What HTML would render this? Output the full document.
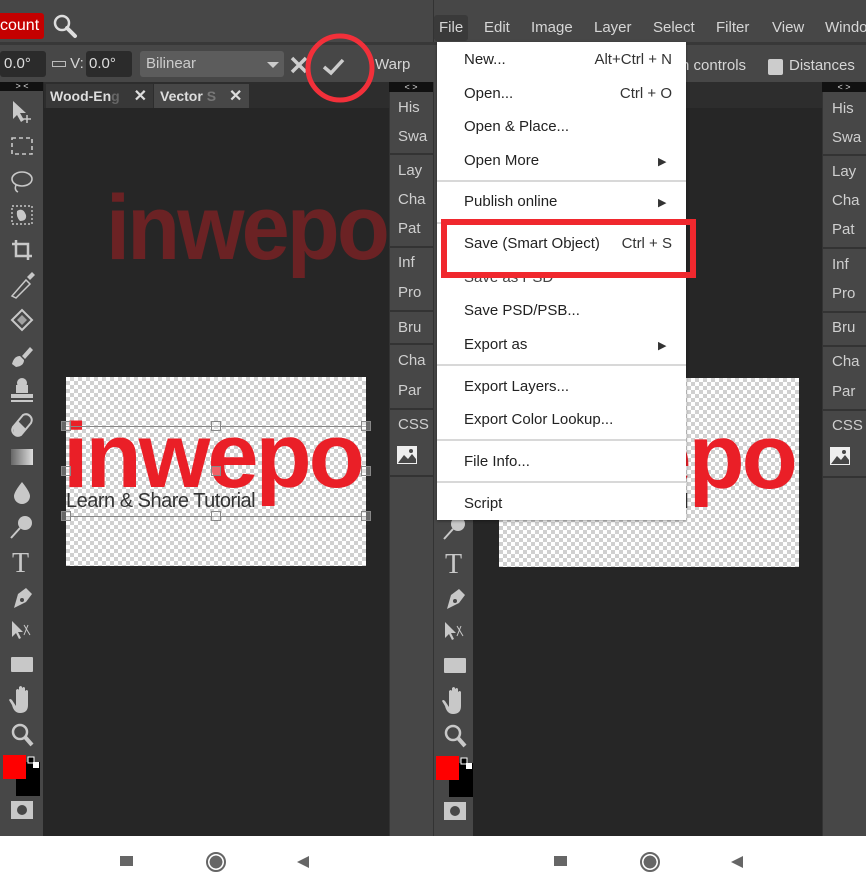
<!DOCTYPE html>
<html><head><meta charset="utf-8"><style>
*{margin:0;padding:0;box-sizing:border-box}
body{width:866px;height:866px;overflow:hidden;background:#fff;font-family:"Liberation Sans",sans-serif;position:relative}
.a{position:absolute}
.t{position:absolute;color:#d6d6d6;font-size:15px;white-space:nowrap}
.chk{background:repeating-conic-gradient(#d0d0d0 0 25%,#fff 0 50%) 0 0/8px 8px}
.pl{position:absolute;color:#cfcfcf;font-size:15px}
.sep{position:absolute;height:2px;background:#333}
.mi{position:absolute;left:464px;font-size:15px;color:#222;white-space:nowrap}
.sc{position:absolute;right:194px;font-size:15px;color:#333;white-space:nowrap}
.ar{position:absolute;left:658px;font-size:11px;color:#333}
.ms{position:absolute;left:437px;width:249px;height:2px;background:#d8d8d8}
.h{position:absolute;width:10px;height:10px;border:1px solid #888;background:rgba(255,255,255,.3)}
.logo{position:absolute;font-weight:bold;font-size:92px;letter-spacing:-3px;line-height:100px;transform:scaleX(1);transform-origin:0 0;white-space:nowrap}
</style></head><body>

<!-- LEFT HALF -->
<div class="a" style="left:0;top:0;width:433px;height:43px;background:#474747"></div>
<div class="a" style="left:0;top:42px;width:433px;height:3px;background:#383838"></div>
<div class="a" style="left:0;top:13px;width:44px;height:26px;background:#c40000;border-radius:0 3px 3px 0;color:#fff;font-size:16px;line-height:26px">count</div>
<svg class="a" style="left:52px;top:13px" width="26" height="26" viewBox="0 0 26 26"><circle cx="10" cy="10" r="7" fill="none" stroke="#ddd" stroke-width="2.5"/><path d="M15 15 L23 23" stroke="#ddd" stroke-width="4" stroke-linecap="round"/></svg>
<div class="a" style="left:0;top:45px;width:433px;height:37px;background:#474747"></div>
<div class="a" style="left:0;top:51px;width:46px;height:26px;background:#2b2b2b;border-radius:3px;color:#ddd;font-size:15px;line-height:26px;padding-left:4px">0.0°</div>
<div class="t" style="left:52px;top:55px"><span style="display:inline-block;width:14px;height:6px;border:1px solid #bbb;vertical-align:middle"></span> V:</div>
<div class="a" style="left:86px;top:51px;width:46px;height:26px;background:#2b2b2b;border-radius:3px;color:#ddd;font-size:15px;line-height:26px;padding-left:3px">0.0°</div>
<div class="a" style="left:140px;top:51px;width:144px;height:26px;background:#5c5c5c;border-radius:3px;color:#ccc;font-size:15px;line-height:26px;padding-left:6px">Bilinear</div>
<div class="a" style="left:267px;top:62px;width:0;height:0;border-left:6px solid transparent;border-right:6px solid transparent;border-top:6px solid #ccc"></div>
<svg class="a" style="left:290px;top:56px" width="18" height="18"><path d="M2 2L16 16M16 2L2 16" stroke="#ccc" stroke-width="3.5"/></svg>
<svg class="a" style="left:322px;top:58px" width="24" height="18"><path d="M2 9L9 15L21 2" stroke="#ccc" stroke-width="3.5" fill="none"/></svg>
<div class="t" style="left:375px;top:56px">Warp</div>

<div class="a" style="left:0;top:82px;width:44px;height:9px;background:#111;color:#ddd;font-size:9px;line-height:9px;text-align:center">&gt; &lt;</div>
<div class="a" style="left:0;top:91px;width:43px;height:745px;background:#474747"></div>
<div class="a" style="left:43px;top:82px;width:346px;height:754px;background:#262626"></div>
<div class="a" style="left:44px;top:82px;width:345px;height:26px;background:#2d2d2d"></div>
<div class="a" style="left:46px;top:84px;width:107px;height:24px;background:#383838;color:#ddd;font-weight:bold;font-size:14px;line-height:24px;padding-left:4px">Wood-En<span style="color:#666">g</span> <span style="margin-left:10px;font-size:16px">✕</span></div>
<div class="a" style="left:154px;top:84px;width:95px;height:24px;background:#474747;color:#ddd;font-weight:bold;font-size:14px;line-height:24px;padding-left:6px">Vector <span style="color:#777">S</span> <span style="margin-left:9px;font-size:16px">✕</span></div>

<div class="logo" style="left:106px;top:178px;color:#6b2224;transform:scaleX(0.94)">inwepo</div>

<div class="a chk" style="left:66px;top:377px;width:300px;height:189px"></div>
<div class="logo" style="left:63px;top:406px;color:#ea1f27">inwepo</div>
<div class="a" style="left:66px;top:490px;color:#333;font-size:20px;letter-spacing:-0.5px">Learn &amp; Share Tutorial</div>
<div class="a" style="left:66px;top:426px;width:300px;height:1px;background:#888"></div>
<div class="a" style="left:66px;top:516px;width:300px;height:1px;background:#888"></div>
<div class="h" style="left:61px;top:421px"></div><div class="h" style="left:211px;top:421px"></div><div class="h" style="left:361px;top:421px"></div>
<div class="h" style="left:61px;top:466px"></div><div class="h" style="left:211px;top:466px"></div><div class="h" style="left:361px;top:466px"></div>
<div class="h" style="left:61px;top:511px"></div><div class="h" style="left:211px;top:511px"></div><div class="h" style="left:361px;top:511px"></div>

<svg class="a" style="left:300px;top:32px" width="80" height="80"><circle cx="40" cy="36" r="32" fill="none" stroke="#f2303a" stroke-width="5"/></svg>

<div class="a" style="left:389px;top:82px;width:44px;height:10px;background:#111;color:#ddd;font-size:9px;line-height:10px;text-align:center">&lt; &gt;</div>
<div class="a" style="left:389px;top:92px;width:44px;height:744px;background:#474747;border-left:1px solid #333"></div>

<!-- RIGHT HALF -->
<div class="a" style="left:433px;top:0;width:433px;height:43px;background:#474747;border-left:1px solid #333"></div>
<div class="a" style="left:433px;top:42px;width:433px;height:3px;background:#383838"></div>
<div class="a" style="left:434px;top:15px;width:34px;height:26px;background:#3a3a3a;border-radius:3px"></div>
<div class="t" style="left:439px;top:19px">File</div>
<div class="t" style="left:484px;top:19px">Edit</div>
<div class="t" style="left:531px;top:19px">Image</div>
<div class="t" style="left:594px;top:19px">Layer</div>
<div class="t" style="left:653px;top:19px">Select</div>
<div class="t" style="left:716px;top:19px">Filter</div>
<div class="t" style="left:772px;top:19px">View</div>
<div class="t" style="left:825px;top:19px">Windo</div>
<div class="a" style="left:433px;top:45px;width:433px;height:37px;background:#474747"></div>
<div class="t" style="left:681px;top:57px">n controls</div>
<div class="a" style="left:768px;top:59px;width:15px;height:16px;background:#ccc;border-radius:2px"></div>
<div class="t" style="left:789px;top:57px">Distances</div>

<div class="a" style="left:433px;top:82px;width:40px;height:754px;background:#474747;border-left:1px solid #333"></div>
<div class="a" style="left:473px;top:82px;width:349px;height:754px;background:#262626"></div>
<div class="a" style="left:473px;top:82px;width:349px;height:26px;background:#2d2d2d"></div>
<div class="a chk" style="left:499px;top:378px;width:300px;height:189px"></div>
<div class="logo" style="left:496px;top:407px;color:#ea1f27">inwepo</div>
<div class="a" style="left:499px;top:491px;color:#333;font-size:20px;letter-spacing:-0.5px">Learn &amp; Share Tutorial</div>

<div class="a" style="left:822px;top:82px;width:44px;height:10px;background:#111;color:#ddd;font-size:9px;line-height:10px;text-align:center">&lt; &gt;</div>
<div class="a" style="left:822px;top:92px;width:44px;height:744px;background:#474747;border-left:1px solid #333"></div>

<!-- toolbars -->
<svg class="a" style="left:0;top:0" width="44" height="836" viewBox="0 0 44 836">
<defs><linearGradient id="g"><stop offset="0" stop-color="#666"/><stop offset="1" stop-color="#ddd"/></linearGradient>
<g id="ic" fill="#c8c8c8" stroke="#c8c8c8">
<g transform="translate(22,112)"><path d="M-9-11L-9 7L-5 3L-1 10L2 8L-2 1L4 1Z" stroke="none"/><path d="M5 3v8M1 7h8" stroke-width="1.5"/></g>
<g transform="translate(22,146)"><rect x="-10" y="-8" width="20" height="16" fill="none" stroke-width="1.6" stroke-dasharray="4 3"/></g>
<g transform="translate(22,181)"><ellipse cx="0" cy="-2" rx="10" ry="7" fill="none" stroke-width="1.6"/><path d="M-6 4q-2 5 2 7" fill="none" stroke-width="1.5"/></g>
<g transform="translate(22,215)"><rect x="-10" y="-9" width="20" height="18" fill="none" stroke-width="1.4" stroke-dasharray="2 2"/><path d="M-5-4q6-4 9 4q1 6-6 6q-4-4-3-10z" stroke="none"/></g>
<g transform="translate(22,250)"><path d="M-6-10v16h16M-10-6h16v16" fill="none" stroke-width="2.5"/></g>
<g transform="translate(22,285)"><path d="M-10 11L4-5L8-1L-6 13Z" fill="none" stroke-width="1.5"/><path d="M5-8l5-5 3 3-5 5z" stroke="none"/></g>
<g transform="translate(22,320)"><path d="M-10 0l10-10 10 10-10 10z" fill="none" stroke-width="2"/><path d="M-5 0l5 5 5-5-5-5z" stroke="none" opacity=".7"/></g>
<g transform="translate(22,354)"><path d="M-10 10q2-8 8-8l4 4q0 6-8 7z" stroke="none"/><path d="M0 2l8-9 3 3-8 9" stroke="none"/></g>
<g transform="translate(22,389)"><path d="M-6-4h12v8h-12z M-11 5h22v4h-22z M-11 11h22v2h-22z" stroke="none"/><circle cx="0" cy="-6" r="5" stroke="none"/></g>
<g transform="translate(22,423)"><path d="M-9 4l10-12q4-2 7 1t1 7l-10 12q-4 2-7-1t-1-7z" fill="none" stroke-width="2"/><path d="M-9 4l5-6 8 8-5 6q-4 2-7-1z" stroke="none"/></g>
<g transform="translate(22,457)"><rect x="-11" y="-8" width="22" height="16" stroke="none" fill="url(#g)"/></g>
<g transform="translate(22,492)"><path d="M0-10q-8 10-8 14a8 8 0 0 0 16 0q0-4-8-14z" stroke="none"/></g>
<g transform="translate(22,526)"><circle cx="3" cy="-3" r="7" stroke="none"/><path d="M-2 2l-9 10" stroke-width="2"/></g>
<g transform="translate(22,561)"><text x="-10" y="11" font-family="Liberation Serif" font-size="28" stroke="none">T</text></g>
<g transform="translate(22,596)"><path d="M-8 12l4-14 8-6 6 6-6 8z" stroke="none"/><circle cx="0" cy="4" r="2" fill="#474747" stroke="none"/></g>
<g transform="translate(22,631)"><path d="M-10-10v16l4-4 3 6 2-1-3-6 5 0z" stroke="none"/><path d="M2-6l6 10M6-6l-4 10" stroke-width="1" fill="none"/></g>
<g transform="translate(22,665)"><rect x="-11" y="-8" width="22" height="15" rx="1" stroke="none"/></g>
<g transform="translate(22,700)"><path d="M-6 6v-16q2-2 3 0v10v-13q2-2 3 0v13v-12q2-2 3 0v12v-9q2-2 3 0v14q0 8-8 8q-6 0-8-8l-3-5q1-2 3 0z" stroke="none"/></g>
<g transform="translate(22,734)"><circle cx="-2" cy="-2" r="7" fill="none" stroke-width="2.5"/><path d="M3 3l7 8" stroke-width="4"/></g>
<rect x="16" y="762" width="24" height="34" fill="#000" stroke="none"/>
<rect x="28" y="757" width="6" height="6" fill="#000" stroke="#fff" stroke-width="1"/><rect x="33" y="762" width="6" height="6" fill="#fff" stroke="none"/>
<rect x="3" y="755" width="23" height="24" fill="#f00" stroke="none"/>
<g transform="translate(22,810)"><rect x="-11" y="-9" width="22" height="18" stroke="none"/><circle cx="0" cy="0" r="5" fill="#474747" stroke="none"/></g>
</g></defs>
<use href="#ic"/>
</svg>
<svg class="a" style="left:433px;top:0" width="40" height="836" viewBox="0 0 40 836"><use href="#ic" transform="translate(0,1)"/></svg>

<!-- menu -->
<div class="a" style="left:437px;top:42px;width:249px;height:478px;background:#fff;box-shadow:0 1px 3px rgba(0,0,0,.4)"></div>
<div class="mi" style="top:51px">New...</div><div class="sc" style="top:51px">Alt+Ctrl + N</div>
<div class="mi" style="top:85px">Open...</div><div class="sc" style="top:85px">Ctrl + O</div>
<div class="mi" style="top:118px">Open &amp; Place...</div>
<div class="mi" style="top:152px">Open More</div><div class="ar" style="top:155px">▶</div>
<div class="ms" style="top:180px"></div>
<div class="mi" style="top:193px">Publish online</div><div class="ar" style="top:196px">▶</div>
<div class="ms" style="top:222px"></div>
<div class="mi" style="top:235px">Save (Smart Object)</div><div class="sc" style="top:235px">Ctrl + S</div>
<div class="mi" style="top:269px;color:#444">Save as PSD</div>
<div class="mi" style="top:302px">Save PSD/PSB...</div>
<div class="mi" style="top:336px">Export as</div><div class="ar" style="top:339px">▶</div>
<div class="ms" style="top:364px"></div>
<div class="mi" style="top:378px">Export Layers...</div>
<div class="mi" style="top:411px">Export Color Lookup...</div>
<div class="ms" style="top:439px"></div>
<div class="mi" style="top:453px">File Info...</div>
<div class="ms" style="top:481px"></div>
<div class="mi" style="top:495px">Script</div>
<div class="a" style="left:441px;top:219px;width:255px;height:59px;border:6px solid #f0282e"></div>

<!-- bottom nav -->
<div class="a" style="left:0;top:836px;width:866px;height:30px;background:#fff"></div>
<div class="a" style="left:120px;top:856px;width:13px;height:10px;background:#666"></div>
<div class="a" style="left:206px;top:852px;width:20px;height:20px;border-radius:50%;border:2px solid #666;background:radial-gradient(#666 55%,transparent 58%)"></div>
<div class="a" style="left:297px;top:856px;width:0;height:0;border-top:6px solid transparent;border-bottom:6px solid transparent;border-right:12px solid #666"></div>
<div class="a" style="left:554px;top:856px;width:13px;height:10px;background:#666"></div>
<div class="a" style="left:640px;top:852px;width:20px;height:20px;border-radius:50%;border:2px solid #666;background:radial-gradient(#666 55%,transparent 58%)"></div>
<div class="a" style="left:731px;top:856px;width:0;height:0;border-top:6px solid transparent;border-bottom:6px solid transparent;border-right:12px solid #666"></div>

<!-- panel labels -->
<div class="pl" style="left:398px;top:99px">His</div><div class="pl" style="left:398px;top:128px">Swa</div>
<div class="sep" style="left:389px;top:153px;width:44px"></div>
<div class="pl" style="left:398px;top:162px">Lay</div><div class="pl" style="left:398px;top:191px">Cha</div><div class="pl" style="left:398px;top:220px">Pat</div>
<div class="sep" style="left:389px;top:246px;width:44px"></div>
<div class="pl" style="left:398px;top:254px">Inf</div><div class="pl" style="left:398px;top:284px">Pro</div>
<div class="sep" style="left:389px;top:310px;width:44px"></div>
<div class="pl" style="left:398px;top:319px">Bru</div>
<div class="sep" style="left:389px;top:343px;width:44px"></div>
<div class="pl" style="left:398px;top:352px">Cha</div><div class="pl" style="left:398px;top:382px">Par</div>
<div class="sep" style="left:389px;top:408px;width:44px"></div>
<div class="pl" style="left:398px;top:416px">CSS</div>
<svg class="a" style="left:397px;top:446px" width="20" height="18"><rect width="20" height="18" fill="#eee"/><path d="M1 17L7 9L11 13L15 8L19 13V17Z" fill="#474747"/><circle cx="14" cy="5" r="2" fill="#474747"/></svg>
<div class="sep" style="left:389px;top:475px;width:44px"></div>

<div class="pl" style="left:832px;top:100px">His</div><div class="pl" style="left:832px;top:129px">Swa</div>
<div class="sep" style="left:822px;top:154px;width:44px"></div>
<div class="pl" style="left:832px;top:163px">Lay</div><div class="pl" style="left:832px;top:192px">Cha</div><div class="pl" style="left:832px;top:221px">Pat</div>
<div class="sep" style="left:822px;top:247px;width:44px"></div>
<div class="pl" style="left:832px;top:256px">Inf</div><div class="pl" style="left:832px;top:285px">Pro</div>
<div class="sep" style="left:822px;top:311px;width:44px"></div>
<div class="pl" style="left:832px;top:319px">Bru</div>
<div class="sep" style="left:822px;top:345px;width:44px"></div>
<div class="pl" style="left:832px;top:353px">Cha</div><div class="pl" style="left:832px;top:383px">Par</div>
<div class="sep" style="left:822px;top:409px;width:44px"></div>
<div class="pl" style="left:832px;top:417px">CSS</div>
<svg class="a" style="left:830px;top:447px" width="20" height="18"><rect width="20" height="18" fill="#eee"/><path d="M1 17L7 9L11 13L15 8L19 13V17Z" fill="#474747"/><circle cx="14" cy="5" r="2" fill="#474747"/></svg>
<div class="sep" style="left:822px;top:476px;width:44px"></div>

</body></html>
